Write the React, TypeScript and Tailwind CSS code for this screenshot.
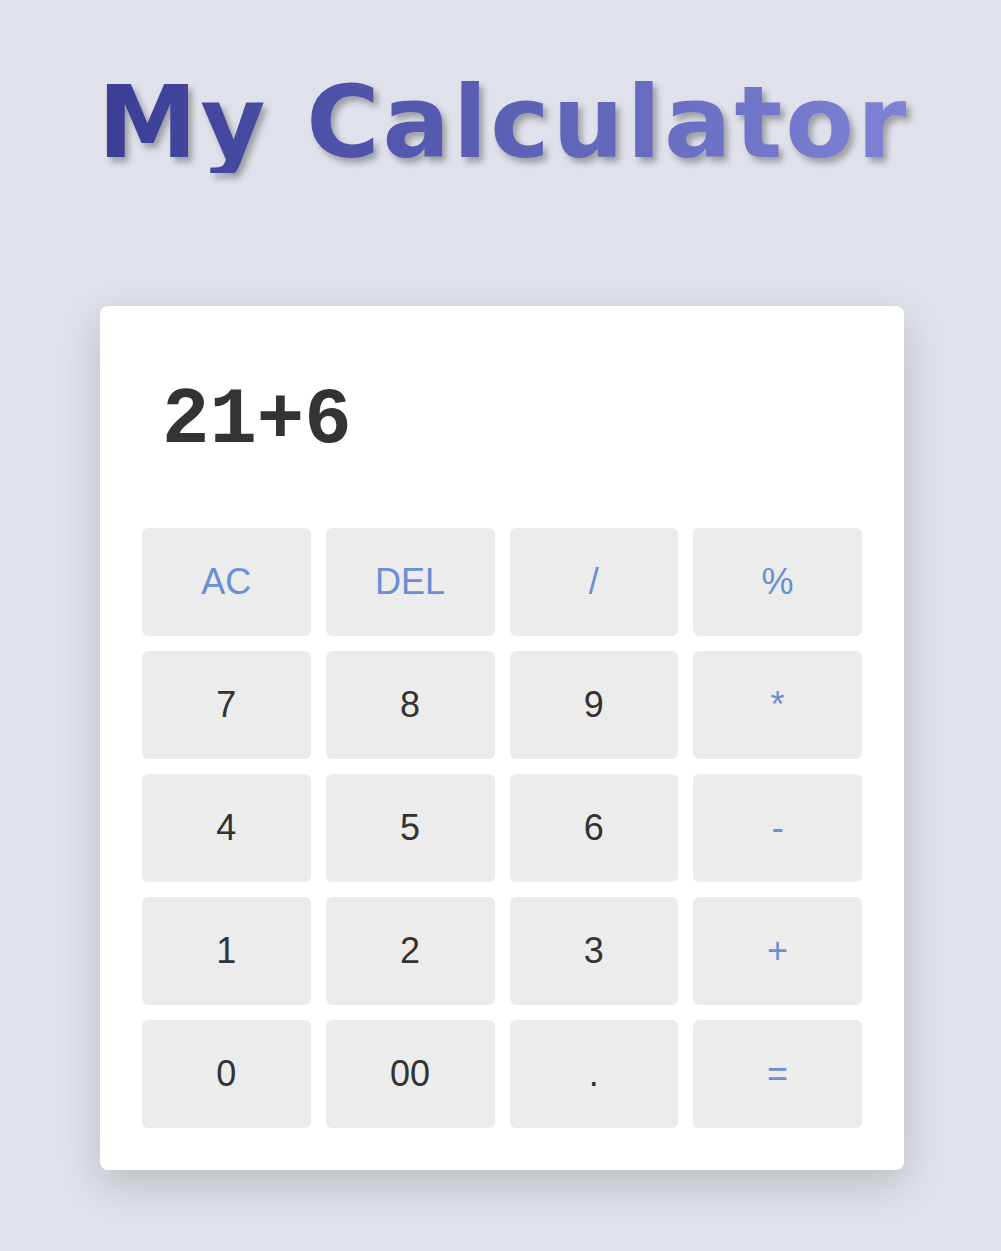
import React from "react";

const keys: { label: string; op?: boolean }[] = [
  { label: "AC", op: true },
  { label: "DEL", op: true },
  { label: "/", op: true },
  { label: "%", op: true },
  { label: "7" },
  { label: "8" },
  { label: "9" },
  { label: "*", op: true },
  { label: "4" },
  { label: "5" },
  { label: "6" },
  { label: "-", op: true },
  { label: "1" },
  { label: "2" },
  { label: "3" },
  { label: "+", op: true },
  { label: "0" },
  { label: "00" },
  { label: "." },
  { label: "=", op: true },
];

export default function App() {
  return (
    <div className="min-h-screen w-full bg-[#dfe2ea] pt-[73px] pb-[81px]">
      <div className="flex justify-center pl-[6px]">
        <h1
          className="m-0 bg-gradient-to-r from-[#3b3d95] to-[#7f83d6] bg-clip-text text-[100px] font-bold leading-none tracking-[3px] text-transparent drop-shadow-[4px_5px_3px_rgba(0,0,0,0.3)]"
          style={{ fontFamily: '"DejaVu Sans", Arial, sans-serif' }}
        >
          My Calculator
        </h1>
      </div>
      <div className="ml-[100px] mt-[133px] w-[804px] rounded-[8px] bg-white px-[42px] pt-[42px] pb-[42px] shadow-[0_14px_40px_rgba(0,0,0,0.17)]">
        <div
          className="h-[180px] pl-[20px] pt-[34px] text-[79px] font-bold leading-none text-[#333333]"
          style={{ fontFamily: '"Liberation Mono", "Courier New", monospace' }}
        >
          21+6
        </div>
        <div className="grid grid-cols-4 gap-[15px]">
          {keys.map((k) => (
            <div
              key={k.label}
              className={
                "flex h-[108px] items-center justify-center rounded-[6px] bg-[#ececec] text-[36px] " +
                (k.op ? "text-[#6a8fd3]" : "text-[#333333]")
              }
              style={{ fontFamily: '"Liberation Sans", Arial, sans-serif' }}
            >
              {k.label}
            </div>
          ))}
        </div>
      </div>
    </div>
  );
}
